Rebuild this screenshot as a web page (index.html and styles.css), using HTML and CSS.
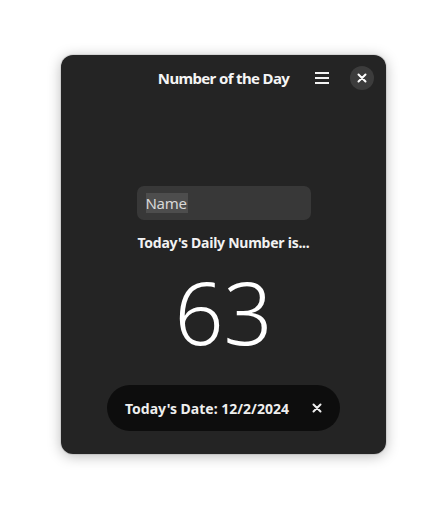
FILE: index.html
```html
<!DOCTYPE html>
<html>
<head>
<meta charset="utf-8">
<link rel="stylesheet" href="styles.css">
</head>
<body>
<div class="window">
  <div class="headerbar">
    <div class="title">Number of the Day</div>
    <div class="header-actions">
      <button class="menu-btn" aria-label="Menu">
        <svg width="16" height="16" viewBox="0 0 16 16"><rect x="1" y="2" width="14" height="2" fill="#f2f2f2"/><rect x="1" y="7" width="14" height="2" fill="#f2f2f2"/><rect x="1" y="12" width="14" height="2" fill="#f2f2f2"/></svg>
      </button>
      <button class="close-btn" aria-label="Close">
        <svg width="10" height="10" viewBox="0 0 10 10"><path d="M1.5 1.5 L8.5 8.5 M8.5 1.5 L1.5 8.5" stroke="#fff" stroke-width="2" stroke-linecap="round"/></svg>
      </button>
    </div>
  </div>
  <div class="content">
    <div class="entry"><span class="sel">Name</span></div>
    <div class="label">Today's Daily Number is...</div>
    <div class="number">63</div>
    <div class="toast">
      <span class="toast-text">Today's Date: 12/2/2024</span>
      <svg class="toast-close" width="10" height="10" viewBox="0 0 10 10"><path d="M1.5 1.5 L8.5 8.5 M8.5 1.5 L1.5 8.5" stroke="#eee" stroke-width="2" stroke-linecap="round"/></svg>
    </div>
  </div>
</div>
</body>
</html>
```
FILE: styles.css
```css
html, body {
  margin: 0;
  padding: 0;
  background: #ffffff;
}
body {
  width: 447px;
  height: 522px;
  font-family: "Noto Sans", "Open Sans", sans-serif;
}
.window {
  margin: 55px 0 0 61px;
  width: 325px;
  height: 399px;
  background: #242424;
  border-radius: 12px;
  box-shadow: 0 2px 14px rgba(0,0,0,0.28), 0 0 0 1px rgba(0,0,0,0.08);
  display: flex;
  flex-direction: column;
  color: #ffffff;
}
.headerbar {
  height: 46px;
  display: flex;
  align-items: center;
  justify-content: center;
  position: relative;
}
.title {
  font-weight: 700;
  font-size: 15px;
  color: #f5f5f5;
  letter-spacing: -0.65px;
}
.header-actions {
  position: absolute;
  right: 12px;
  top: 11px;
  display: flex;
  align-items: center;
  gap: 20px;
}
.menu-btn, .close-btn {
  border: none;
  padding: 0;
  background: transparent;
  display: flex;
  align-items: center;
  justify-content: center;
}
.menu-btn {
  width: 16px;
  height: 24px;
}
.close-btn {
  width: 24px;
  height: 24px;
  border-radius: 50%;
  background: #3c3c3c;
}
.content {
  display: flex;
  flex-direction: column;
  align-items: center;
  padding-top: 85px;
}
.entry {
  width: 174px;
  height: 34px;
  box-sizing: border-box;
  background: #383838;
  border-radius: 7px;
  display: flex;
  align-items: center;
  padding-left: 9px;
}
.sel {
  background: #4d4d4d;
  color: #d8d8d8;
  font-size: 15px;
  line-height: 20px;
  letter-spacing: -0.3px;
  padding: 0 1px 0 0;
}
.label {
  margin-top: 13px;
  font-weight: 700;
  font-size: 14px;
  color: #f2f2f2;
  letter-spacing: -0.25px;
}
.number {
  margin-top: 10px;
  font-size: 86px;
  font-weight: 300;
  line-height: 100px;
  color: #ffffff;
}
.toast {
  margin-top: 23px;
  width: 233px;
  height: 46px;
  box-sizing: border-box;
  background: #0d0d0d;
  border-radius: 23px;
  display: flex;
  align-items: center;
  padding: 0 18px;
  justify-content: space-between;
}
.toast-text {
  font-weight: 700;
  font-size: 14px;
  color: #eeeeee;
}
```
